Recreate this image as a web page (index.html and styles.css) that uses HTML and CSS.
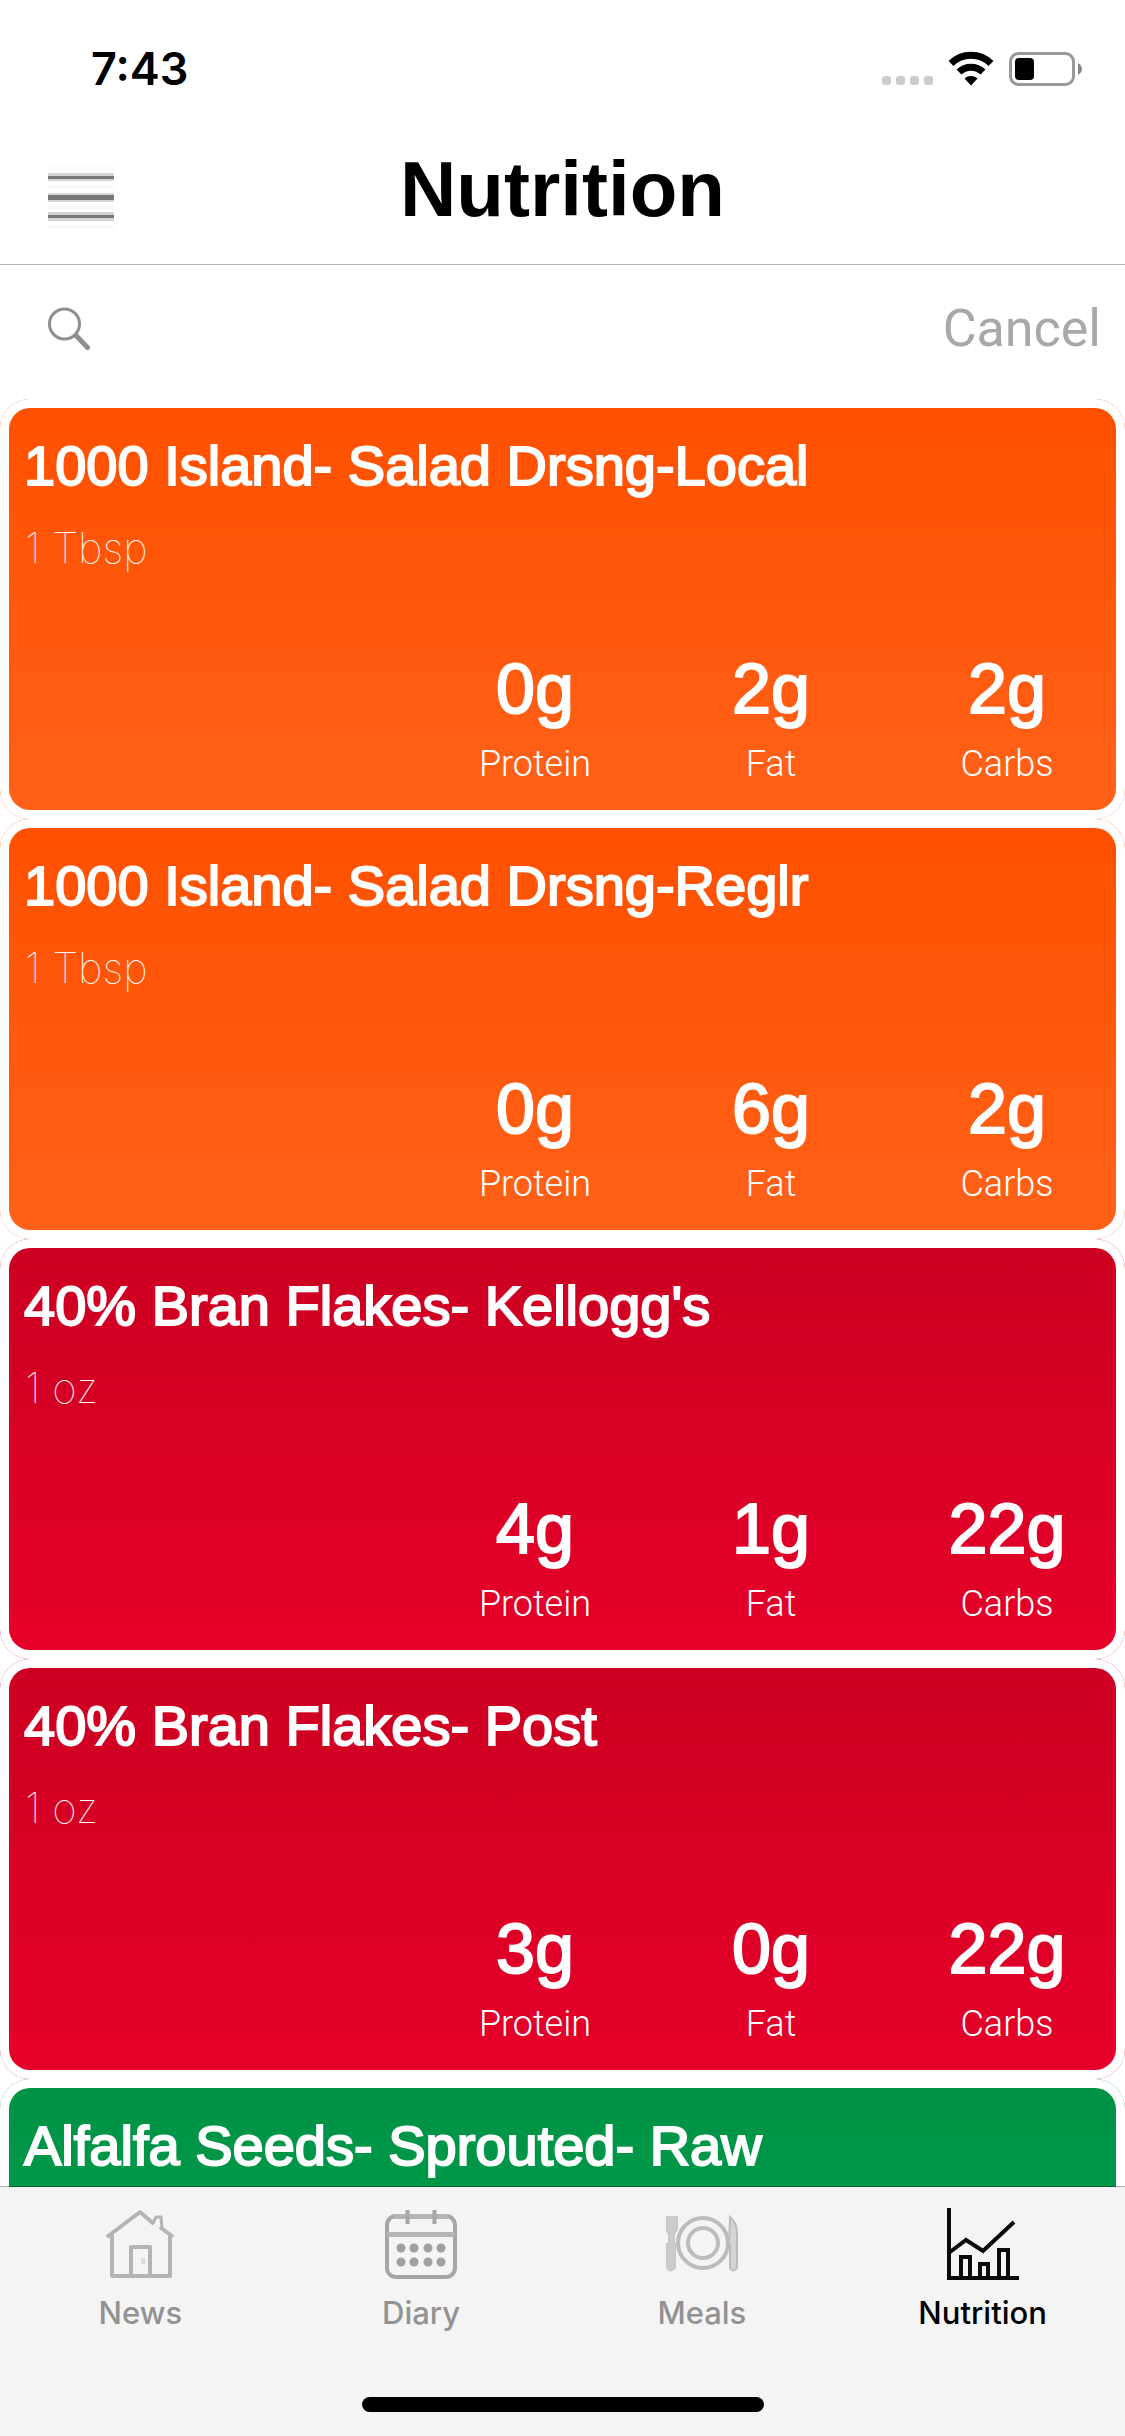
FILE: index.html
```html
<!DOCTYPE html>
<html lang="en">
<head>
<meta charset="utf-8">
<meta name="viewport" content="width=device-width, initial-scale=1">
<title>Nutrition</title>
<link rel="stylesheet" href="styles.css">
</head>
<body>
<div class="app">
  <div class="status">
    <span class="status-time">7:43</span>
    <div class="status-icons">
      <svg class="signal" viewBox="0 0 52 36" width="52" height="36" aria-hidden="true"><rect x="1" y="25" width="9" height="9" rx="3"/><rect x="15" y="25" width="9" height="9" rx="3"/><rect x="29" y="25" width="9" height="9" rx="3"/><rect x="43" y="25" width="9" height="9" rx="3"/></svg>
      <svg viewBox="0 0 46 36" width="46" height="36" aria-hidden="true"><g fill="none" stroke="#000" stroke-width="7"><path d="M3 12.500a28.500 28.500 0 0 1 40 0"/><path d="M11 21a17.500 17.500 0 0 1 24 0"/></g><path d="M16.500 27.500a10 10 0 0 1 13 0L23 34.500z"/></svg>
      <svg viewBox="0 0 74 36" width="74" height="36" aria-hidden="true"><rect x="1.500" y="2.500" width="63" height="31" rx="8" fill="none" stroke="#999" stroke-width="3"/><rect x="6" y="7" width="19" height="22" rx="4"/><path d="M69 12q4 2.500 4 6t-4 6z" fill="#888"/></svg>
    </div>
  </div>

  <header class="header">
    <button class="menu" type="button" aria-label="Menu">
      <svg viewBox="0 0 66 62" width="66" height="62" aria-hidden="true"><g fill="#fafafa"><path d="M0 0h66v4H0zM0 18h66v4H0zM0 39h66v4H0zM0 58h66v4H0z"/></g><g fill="#d4d4d4"><path d="M0 6h66v8H0zM0 26h66v9H0zM0 45h66v9H0z"/></g><g fill="#777"><path d="M0 9h66v3H0zM0 28h66v5H0zM0 48h66v3H0z"/></g></svg>
    </button>
    <h1 class="title">Nutrition</h1>
  </header>

  <form class="search" role="search">
    <label class="search-label" for="q" aria-label="Search foods">
      <svg viewBox="0 0 43 44" width="43" height="44" fill="none" stroke="#8e8e93" aria-hidden="true"><circle cx="16.500" cy="17" r="15" stroke-width="3"/><path d="M28 28.500L39.500 40.500" stroke-width="5" stroke-linecap="round"/></svg>
    </label>
    <input class="search-input" id="q" type="text">
    <button class="cancel" type="reset">Cancel</button>
  </form>

  <main class="content">
    <ul class="foods">
      <li class="food orange"><div class="frame"><article class="card">
        <h2 class="name">1000 Island- Salad Drsng-Local</h2>
        <p class="serving">1 Tbsp</p>
        <dl class="macros"><div class="macro"><dt>Protein</dt><dd>0g</dd></div><div class="macro"><dt>Fat</dt><dd>2g</dd></div><div class="macro"><dt>Carbs</dt><dd>2g</dd></div></dl>
      </article></div></li>
      <li class="food orange"><div class="frame"><article class="card">
        <h2 class="name">1000 Island- Salad Drsng-Reglr</h2>
        <p class="serving">1 Tbsp</p>
        <dl class="macros"><div class="macro"><dt>Protein</dt><dd>0g</dd></div><div class="macro"><dt>Fat</dt><dd>6g</dd></div><div class="macro"><dt>Carbs</dt><dd>2g</dd></div></dl>
      </article></div></li>
      <li class="food red"><div class="frame"><article class="card">
        <h2 class="name">40% Bran Flakes- Kellogg's</h2>
        <p class="serving">1 oz</p>
        <dl class="macros"><div class="macro"><dt>Protein</dt><dd>4g</dd></div><div class="macro"><dt>Fat</dt><dd>1g</dd></div><div class="macro"><dt>Carbs</dt><dd>22g</dd></div></dl>
      </article></div></li>
      <li class="food red"><div class="frame"><article class="card">
        <h2 class="name">40% Bran Flakes- Post</h2>
        <p class="serving">1 oz</p>
        <dl class="macros"><div class="macro"><dt>Protein</dt><dd>3g</dd></div><div class="macro"><dt>Fat</dt><dd>0g</dd></div><div class="macro"><dt>Carbs</dt><dd>22g</dd></div></dl>
      </article></div></li>
      <li class="food green"><div class="frame"><article class="card">
        <h2 class="name">Alfalfa Seeds- Sprouted- Raw</h2>
      </article></div></li>
    </ul>
  </main>

  <nav class="tabs">
    <div class="tab-row">
      <a class="tab" href="#news">
        <svg viewBox="0 0 72 72" width="72" height="72" fill="none" stroke="#b4b4b4" stroke-width="4" aria-hidden="true"><path d="M3 29L36 4l14 12M56 19l13 10M8 27v41h58V27M27 68V39h19v29" stroke-linejoin="round"/><path d="M49 15l3-6h5l1 12" stroke-width="3"/><path d="M39 50v6" stroke="#dcdcdc"/></svg>
        <span>News</span>
      </a>
      <a class="tab" href="#diary">
        <svg viewBox="0 0 72 72" width="72" height="72" aria-hidden="true"><g fill="none" stroke="#a6a6a6"><rect x="2" y="8" width="68" height="61" rx="9" stroke-width="4"/><path d="M9 8.500h54M2 26.500h68" stroke="#b4b4b4" stroke-width="5"/><path d="M22.500 2v14M49.500 2v14" stroke-width="4"/></g><g fill="#a0a0a0"><circle cx="16" cy="40" r="4.500"/><circle cx="29" cy="40" r="4.500"/><circle cx="43" cy="40" r="4.500"/><circle cx="56" cy="40" r="4.500"/><circle cx="16" cy="54" r="4.500"/><circle cx="29" cy="54" r="4.500"/><circle cx="43" cy="54" r="4.500"/><circle cx="56" cy="54" r="4.500"/></g></svg>
        <span>Diary</span>
      </a>
      <a class="tab" href="#meals">
        <svg viewBox="0 0 72 72" width="72" height="72" fill="none" stroke="#bcbcbc" stroke-width="4" aria-hidden="true"><circle cx="37" cy="35" r="25"/><circle cx="37" cy="35" r="15"/><path d="M1 9h10v12l-3 5v10h1v24q-4 5-8 0V36h2V26l-2-3z" fill="#ccc" stroke="#c8c8c8" stroke-width="2"/><path d="M64 9q7 6 7 16v35q-4 5-7 0V38h-1z" fill="#d4d4d4" stroke-width="2"/></svg>
        <span>Meals</span>
      </a>
      <a class="tab active" href="#nutrition" aria-current="page">
        <svg viewBox="0 0 72 72" width="72" height="72" fill="none" stroke="#0a0a0a" stroke-width="4" aria-hidden="true"><path d="M2 0v70h70"/><path d="M3 44l16-12 17 11 31-29"/><path d="M14 70V49h9v21M33 70V56h8v14M52 70V42h9v28"/></svg>
        <span>Nutrition</span>
      </a>
    </div>
    <div class="home-bar"></div>
  </nav>
</div>
</body>
</html>
```
FILE: styles.css
```css
* { box-sizing: border-box; }

body {
  margin: 0;
  background: #fff;
  color: #000;
  font-family: "Liberation Sans", Arial, sans-serif;
}

h1, h2, p, ul, dl, dd { margin: 0; padding: 0; }

button, input {
  border: 0;
  padding: 0;
  background: none;
  font: inherit;
}

svg { display: block; }

.app {
  display: flex;
  flex-direction: column;
  height: 100vh;
}

.status {
  display: flex;
  justify-content: space-between;
  align-items: center;
  height: 132px;
  padding: 6px 42px 0 91px;
}

.status-time {
  font: 600 45px/56px Inter, sans-serif;
}

.status-icons {
  display: flex;
  gap: 15px;
}

.signal { fill: #ccc; }

.header {
  display: grid;
  grid-template-columns: 66px 1fr 66px;
  align-items: center;
  height: 133px;
  padding: 0 48px;
  border-bottom: 1px solid #b2b2b2;
}

.title {
  padding-bottom: 18px;
  font-size: 78px;
  line-height: 90px;
  text-align: center;
}

.search {
  display: flex;
  align-items: center;
  height: 134px;
  padding: 2px 24px 8px 48px;
}

.search-input {
  flex: 1;
  min-width: 0;
  height: 90px;
  padding: 0 24px;
  font-size: 52px;
  outline: 0;
}

.cancel {
  color: #a8a8a8;
  font: 400 52px/60px Roboto, sans-serif;
}

.content {
  flex: 1;
  min-height: 0;
  margin-bottom: -1px;
  overflow: hidden;
}

.foods { list-style: none; }

.food,
.frame { border-radius: 30px; }

.frame {
  padding: 9px;
  background: #fff;
}

.card {
  height: 402px;
  border-radius: 21px;
  color: #fff;
}

.orange, .orange .card { background: linear-gradient(#ff5000, #ff6119); }
.red, .red .card { background: linear-gradient(#cc0022, #e60029); }
.green, .green .card { background: linear-gradient(#009245, #00a651); }

.name {
  padding: 28px 15px 0;
  font-size: 56px;
  font-weight: 400;
  line-height: 60px;
  -webkit-text-stroke: 2px #fff;
}

.serving {
  padding: 28px 16px 0;
  font: 100 42px/48px Inter, sans-serif;
}

.macros {
  display: grid;
  grid-template-columns: repeat(3, 218px);
  gap: 18px;
  justify-content: end;
  padding-top: 78px;
}

.macro {
  display: flex;
  flex-direction: column-reverse;
  gap: 15px;
  text-align: center;
}

.macro dt { font: 300 36px/42px Roboto, sans-serif; }

.macro dd {
  font-size: 70px;
  line-height: 78px;
  -webkit-text-stroke: 2px #fff;
}

.tabs {
  position: relative;
  display: flex;
  flex-direction: column;
  justify-content: space-between;
  align-items: center;
  height: 250px;
  padding: 21px 0 24px;
  border-top: 1px solid rgba(0, 0, 0, 0.3);
  background: #f4f4f4;
  background-clip: padding-box;
}

.tab-row {
  display: grid;
  grid-template-columns: repeat(4, 1fr);
  width: 100%;
  padding-right: 2px;
}

.tab {
  display: flex;
  flex-direction: column;
  align-items: center;
  gap: 15px;
  color: #929292;
  font: 500 31px/36px Inter, sans-serif;
  text-decoration: none;
}

.active { color: #000; }

.home-bar {
  width: 402px;
  height: 15px;
  border-radius: 8px;
  background: #000;
}
```
